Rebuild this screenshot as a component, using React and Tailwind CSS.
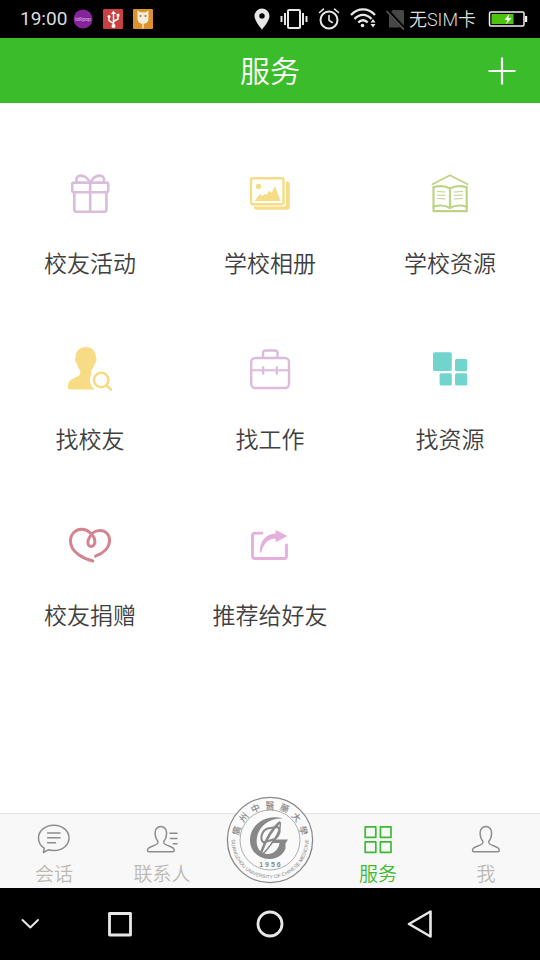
const stroke = { fill: 'none', strokeLinecap: 'round', strokeLinejoin: 'round' };

function GiftIcon() {
  return (
    <svg viewBox="0 0 60 60" className="size-15 text-[#d9bddb]" stroke="currentColor" strokeWidth="2.6" {...stroke}>
      <rect x="12.2" y="18.6" width="36" height="9.6" rx="2" />
      <path d="M14.3 28.4V45.5a2.2 2.2 0 0 0 2.2 2.2H44.2a2.2 2.2 0 0 0 2.2-2.2V28.4" />
      <path d="M30.2 18.6V47.5" />
      <path d="M30 18.4C28 14.5 24.5 11.3 20.2 11.6C16.5 12 15.4 15.5 17 18.4" />
      <path d="M30.4 18.4C32.4 14.5 36 11.3 40.2 11.6C43.9 12 45 15.5 43.4 18.4" />
    </svg>
  );
}

function AlbumIcon() {
  return (
    <svg viewBox="0 0 60 60" className="size-15 text-[#f7dc86]" fill="currentColor">
      <path d="M46 17.5h1.500a2.300 2.300 0 0 1 2.300 2.300V43.500a2.300 2.300 0 0 1-2.300 2.300H16.300a2.300 2.300 0 0 1-2.300-2.300V42.500H43.800a2.200 2.200 0 0 0 2.200-2.200Z" />
      <rect x="11" y="14.2" width="32.5" height="26" rx="1.8" fill="none" stroke="currentColor" strokeWidth="2.4" />
      <circle cx="18.5" cy="22.5" r="2.7" />
      <path d="M14.5 37L19.8 30L22.5 32.2L25 29.5L26.3 31L29.3 26.5L31.5 29L35 22L40.6 37Z" />
    </svg>
  );
}

function BookIcon() {
  return (
    <svg viewBox="0 0 60 60" className="size-15 text-[#bdd486]" stroke="currentColor" strokeWidth="2.2" {...stroke}>
      <path d="M12.5 20.3L30 11.3L47.5 20.3" strokeWidth="1.8" />
      <path d="M30 24.5C26 22 19 21.8 13.5 23V47.2H46.700V23C41 21.8 34 22 30 24.5V43.5" />
      <path d="M13.5 42.7C19 41 26 41.5 30 44C34 41.5 41 41 46.700 42.7" />
      <path d="M17.5 27.5L25 28M17.5 31L25 31.5M17.5 34.5L25 35M34.500 28L42.5 27.5M34.500 31.5L42.5 31M34.500 35L42.5 34.5" strokeWidth="1" />
    </svg>
  );
}

function FindPersonIcon() {
  return (
    <svg viewBox="0 0 60 60" className="size-15 text-[#f8dc85]">
      <path
        d="M25.7 7C32 7 36.2 11.5 36 18C37.2 18.5 36.5 22.5 34.8 23.5C34.2 26.5 32.5 29 31.2 30.5V34.5C33 36.5 38 37.5 41 40V49.5H10C8 49.5 7.5 47.5 8 45C8.8 39.5 14 38 18.5 36C20 35 20.5 33.5 20.2 30.5C18.5 29 17.5 26.5 16.9 23.5C15 22.5 14.5 18.5 15.6 18C15.3 11.5 19.5 7 25.7 7Z"
        fill="currentColor"
      />
      <circle cx="41.2" cy="40" r="11.3" fill="#fff" />
      <path d="M47 46L51 49.6" stroke="currentColor" strokeWidth="2.8" strokeLinecap="round" />
      <circle cx="41.2" cy="40" r="7.2" fill="none" stroke="currentColor" strokeWidth="2.6" />
    </svg>
  );
}

function BriefcaseIcon() {
  return (
    <svg viewBox="0 0 60 60" className="size-15 text-[#dbbddb]" stroke="currentColor" strokeWidth="2.4" {...stroke}>
      <rect x="11.2" y="18" width="37.8" height="30" rx="4" />
      <path d="M23 17.8V13a2.5 2.5 0 0 1 2.5-2.5h9.500a2.500 2.500 0 0 1 2.500 2.500V17.800" />
      <path d="M11.2 30.2H22M25 30.2H35M38 30.2H49" strokeWidth="2" />
      <path d="M23.2 27.5V33.5M36.8 27.5V33.5" />
    </svg>
  );
}

function BlocksIcon() {
  return (
    <svg viewBox="0 0 60 60" className="size-15 text-[#72d5cd]" fill="currentColor">
      <rect x="13" y="12.3" width="18.8" height="18.8" rx="1.5" />
      <rect x="35" y="19" width="12.2" height="12.2" rx="1.5" />
      <rect x="19.6" y="33.3" width="12.2" height="12.2" rx="1.5" />
      <rect x="35" y="33.3" width="12.2" height="12.2" rx="1.5" />
    </svg>
  );
}

function HeartIcon() {
  return (
    <svg viewBox="0 0 60 60" className="size-15 text-[#d38490]" stroke="currentColor" strokeWidth="3" {...stroke}>
      <path d="M32.8 45C24 43 10.5 36.5 10.5 25C10.5 17.5 16 13 22 13.2C28.5 13.5 34.8 19.5 34.9 25.5C35 28.5 33 30.6 30.8 30.4C28 30.2 27.3 27 28.3 24C30 18.5 34.5 14.5 39.8 14.5C45.5 14.5 49.7 18.5 49.6 24.5C49.5 32 42.5 37.5 35.5 40.2" />
    </svg>
  );
}

function ShareIcon() {
  return (
    <svg viewBox="0 0 60 60" className="size-15 text-[#e4aedd]">
      <path d="M22 17.2H15a2.5 2.5 0 0 0-2.5 2.5V40a2.5 2.5 0 0 0 2.500 2.500H44a2.500 2.500 0 0 0 2.500-2.500V29" stroke="currentColor" strokeWidth="2.8" {...stroke} />
      <path d="M19.8 36.8C19.5 26 25 18 35.6 17.6V14L47.5 20L35.6 26.2V22.8C28.500 22.500 23.500 27.500 21.200 36.500Z" fill="currentColor" />
    </svg>
  );
}

function ChatIcon() {
  return (
    <svg viewBox="0 0 36 36" className="size-9" stroke="currentColor" strokeWidth="1.5" {...stroke}>
      <path d="M7.4 31.5L8.3 27.2C4.5 24.900 2.5 21.2 2.5 17C2.5 9.8 9.3 4.3 17.8 4.3C26.4 4.3 33 9.8 33 17C33 24.2 26.4 29.6 17.8 29.6C15.8 29.6 13.9 29.3 12.2 28.8Z" />
      <path d="M11.6 11.9H24M11.6 16.8H24M11.6 21.7H19.5" />
    </svg>
  );
}

const bust =
  'M17.8 5.6C21.5 5.6 23.7 8.3 23.6 12C23.5 15.5 22.5 18.5 20.8 20.2C20.4 22.5 21.3 23.3 24.5 24.4C28.5 25.8 31.2 26.5 31.3 29.2C31.3 30.3 30.8 30.8 29.8 30.8H6C5 30.8 4.5 30.3 4.5 29.2C4.6 26.5 7.3 25.8 11.3 24.4C14.5 23.3 15.3 22.5 14.9 20.2C13.2 18.5 12.2 15.5 12.1 12C12 8.3 14.2 5.6 17.8 5.6Z';

function ContactsIcon() {
  return (
    <svg viewBox="0 0 36 36" className="size-9" stroke="currentColor" strokeWidth="1.5" {...stroke}>
      <path d={bust} transform="translate(-1 0)" />
      <path d="M26 12.3H33M26.5 17.6H33M29.3 22.8H33" />
    </svg>
  );
}

function ServicesIcon() {
  return (
    <svg viewBox="0 0 36 36" className="size-9" stroke="currentColor" strokeWidth="1.7" {...stroke}>
      <rect x="5.2" y="5.8" width="10.6" height="10.6" />
      <rect x="20.4" y="5.8" width="10.6" height="10.6" />
      <rect x="5.2" y="20.8" width="10.6" height="10.6" />
      <rect x="20.4" y="20.8" width="10.6" height="10.6" />
    </svg>
  );
}

function MeIcon() {
  return (
    <svg viewBox="0 0 36 36" className="size-9" stroke="currentColor" strokeWidth="1.5" {...stroke}>
      <path d={bust} />
    </svg>
  );
}

function Crest() {
  return (
    <svg viewBox="0 0 88 88" className="size-22" fill="#888">
      <defs>
        <path id="crest-top" d="M12.5 44A31.500 31.500 0 0 1 75.500 44" />
        <path id="crest-bottom" d="M6.1 37.3A38.500 38.500 0 1 0 81.900 37.300" />
      </defs>
      <circle cx="44" cy="44" r="42.6" fill="#fafafa" stroke="#888" strokeWidth="1.3" />
      <circle cx="44" cy="44" r="30" fill="none" stroke="#999" strokeWidth="0.8" />
      <text className="font-['Noto_Sans_CJK_TC',sans-serif] text-[9px] font-medium">
        <textPath href="#crest-top" startOffset="50%" textAnchor="middle">
          廣&ensp;州&ensp;中&ensp;醫&ensp;藥&ensp;大&ensp;學
        </textPath>
      </text>
      <text className="font-['Liberation_Sans',sans-serif] text-[5px] font-normal">
        <textPath href="#crest-bottom" startOffset="50%" textAnchor="middle">
          GUANGZHOU UNIVERSITY OF CHINESE MEDICINE
        </textPath>
      </text>
      <circle cx="7.8" cy="37" r="0.9" />
      <circle cx="80.2" cy="37" r="0.9" />
      <text x="44" y="71" textAnchor="middle" className="font-['Liberation_Sans',sans-serif] text-[7px] font-bold">
        1 9 5 6
      </text>
      <path d="M57 22.5C42 17.5 25 27 24 43C23.5 55 33 63.5 44 63C52 62.6 57.5 58 59.5 52.5V47.5L62 43.5H47L45 47H53.5C52.5 54 47 58.5 41 58C33 57.3 29.5 50 31 41.5C33 29.5 43.5 22 57 22.5Z" />
      <path d="M54 26C48 31 40 43 34.5 58" fill="none" stroke="#888" strokeWidth="2.5" />
      <path d="M54 26C56 32 49 45 37 58" fill="none" stroke="#888" strokeWidth="1.5" />
      <path d="M41.5 32.5C35.5 35 33.5 43 37.5 46.5L49 43C54 39 55.5 32 51 31Z" fill="none" stroke="#888" strokeWidth="2" />
    </svg>
  );
}

function StatusBar() {
  return (
    <div className="flex h-[38px] items-center justify-between bg-black pr-3 pl-5 text-[18px] text-[#dcdcdc]">
      <div className="flex items-center gap-2.5">
        <span className="-mr-1 font-['Roboto',sans-serif] text-[19px] font-normal">19:00</span>
        <svg viewBox="0 0 20 20" className="size-5">
          <circle cx="10" cy="10" r="9.5" fill="#85239a" />
          <text x="10" y="12" textAnchor="middle" fill="#e4c4ea" className="font-['Liberation_Sans',sans-serif] text-[5px]">
            lollipop
          </text>
        </svg>
        <svg viewBox="0 0 20 20" className="size-5">
          <rect width="20" height="20" rx="1" fill="#c9403f" />
          <path d="M10.5 4V17M10.5 14.5L6 11.5V8M10.5 12.5L15 10V7" stroke="#fff" strokeWidth="1.5" fill="none" />
          <path d="M10.5 1.5L13 5H8Z" fill="#fff" />
          <circle cx="10.5" cy="17" r="2" fill="#fff" />
          <circle cx="6" cy="7.5" r="1.5" fill="#fff" />
          <rect x="13.6" y="4.8" width="2.8" height="2.8" fill="#fff" />
        </svg>
        <svg viewBox="0 0 20 20" className="size-5">
          <rect width="20" height="20" rx="1" fill="#dc922c" />
          <path d="M4.5 1.5L7.5 3.3H12.5L15.5 1.5V9.5C15.5 13 13 14.8 10 14.8S4.5 13 4.5 9.5Z" fill="#f6ecd9" />
          <path d="M10 14.5V19.5" stroke="#f6ecd9" strokeWidth="1.3" />
          <circle cx="7.5" cy="7" r="1" fill="#9a7443" />
          <circle cx="12.5" cy="7" r="1" fill="#9a7443" />
        </svg>
      </div>
      <div className="flex items-center gap-2.5">
        <svg viewBox="0 0 16 22" className="h-[22px] w-4" fill="#e8e8e8">
          <path fillRule="evenodd" d="M8 0.5A7.5 7.5 0 0 0 0.5 8C0.5 13 8 21.5 8 21.5S15.5 13 15.5 8A7.5 7.5 0 0 0 8 0.5ZM8 5.2a2.7 2.7 0 1 1 0 5.4a2.7 2.7 0 0 1 0-5.4Z" />
        </svg>
        <svg viewBox="0 0 28 22" className="h-[22px] w-7" fill="none" stroke="#e8e8e8" strokeWidth="2">
          <rect x="8" y="2" width="12" height="18" rx="1" />
          <path d="M5 5V17M1.5 8V14M23 5V17M26.5 8V14" />
        </svg>
        <svg viewBox="0 0 22 22" className="size-[22px]" stroke="#e8e8e8" strokeWidth="2" {...stroke}>
          <circle cx="11" cy="12" r="8.5" />
          <path d="M11 7.500V12.300L14.200 14.500M1.500 4.500L5.500 1.200M20.500 4.500L16.500 1.200" strokeWidth="1.6" />
        </svg>
        <svg viewBox="0 0 26 22" className="h-[22px] w-[26px]" fill="none" stroke="#e8e8e8" strokeWidth="2.3">
          <path d="M1 7C8 -0.500 18 -0.500 25 7M4.500 11C9.500 5.500 16.500 5.500 21.500 11M8.300 14.500C11 11.500 15 11.500 17.700 14.500" />
          <circle cx="12.5" cy="17.5" r="1.8" fill="#e8e8e8" stroke="none" />
          <path d="M20.500 14.500L23 11L25.500 14.500ZM20.500 16L23 19.500L25.500 16Z" fill="#e8e8e8" stroke="none" />
        </svg>
        <div className="flex items-center gap-[3px]">
          <svg viewBox="0 0 20 22" className="h-[22px] w-5">
            <path d="M7 2H16.5A1.5 1.5 0 0 1 18 3.5V19.5H3V6Z" fill="#474747" />
            <path d="M1 2L18.5 21" stroke="#000" strokeWidth="3.5" />
            <path d="M0.5 3L18 21.5" stroke="#555" strokeWidth="1.8" />
          </svg>
          <span className="pr-0.5 font-['Roboto','Noto_Sans_CJK_SC',sans-serif]">无SIM卡</span>
        </div>
        <svg viewBox="0 0 40 16" className="h-4 w-10">
          <rect x="1.5" y="1" width="34.5" height="14" rx="1.5" fill="none" stroke="#f0f0f0" strokeWidth="1.5" />
          <rect x="3.5" y="3" width="22" height="10" fill="#4cc40f" />
          <rect x="37" y="5" width="2.2" height="6" fill="#f0f0f0" />
          <path d="M21.5 2.5L16.5 9H19.5L18 13.5L23.5 7H20.3Z" fill="#fff" />
        </svg>
      </div>
    </div>
  );
}

const services = [
  { label: '校友活动', Icon: GiftIcon },
  { label: '学校相册', Icon: AlbumIcon },
  { label: '学校资源', Icon: BookIcon },
  { label: '找校友', Icon: FindPersonIcon },
  { label: '找工作', Icon: BriefcaseIcon },
  { label: '找资源', Icon: BlocksIcon },
  { label: '校友捐赠', Icon: HeartIcon },
  { label: '推荐给好友', Icon: ShareIcon },
];

function Tab({ label, Icon, active }) {
  return (
    <a href="#" aria-current={active ? 'page' : undefined} className={`flex flex-col items-center gap-1 pt-[7px] ${active ? 'text-[#3dba33]' : 'text-[#8c8c8c]'}`}>
      <Icon />
      <span className={`text-[19px] leading-6 ${active ? '' : 'text-[#bdbab3]'}`}>{label}</span>
    </a>
  );
}

export default function App() {
  return (
    <div className="flex min-h-screen flex-col bg-white font-['Noto_Sans_CJK_SC',sans-serif] font-[350]">
      <StatusBar />
      <header className="grid h-[65px] grid-cols-[1fr_auto_1fr] items-center bg-[#3bbd2b] px-6 text-white">
        <h1 className="col-start-2 pb-1 text-[30px] leading-10">服务</h1>
        <button type="button" aria-label="添加" className="justify-self-end">
          <svg viewBox="0 0 28 28" className="size-7" stroke="#fff" strokeWidth="2.2">
            <path d="M14 0.5V27.5M0.5 14H27.5" />
          </svg>
        </button>
      </header>

      <main className="flex-1 pt-[61px]">
        <div className="grid grid-cols-3 gap-y-[62px]">
          {services.map(({ label, Icon }) => (
            <button key={label} type="button" className="flex flex-col items-center gap-[22px]">
              <Icon />
              <span className="text-[23px] leading-8 text-[#404040]">{label}</span>
            </button>
          ))}
        </div>
      </main>

      <nav className="grid h-[75px] grid-cols-5 border-t border-[#e2e2e2] bg-[#f8f8f8]">
        <Tab label="会话" Icon={ChatIcon} />
        <Tab label="联系人" Icon={ContactsIcon} />
        <a href="#" aria-label="首页" className="relative">
          <span className="absolute bottom-1 left-1/2 -translate-x-1/2">
            <Crest />
          </span>
        </a>
        <Tab label="服务" Icon={ServicesIcon} active />
        <Tab label="我" Icon={MeIcon} />
      </nav>

      <div className="grid h-18 grid-cols-[1fr_2fr_3fr_2fr_1fr] place-items-center bg-black text-[#e8e8e8]">
        <button type="button" aria-label="收起">
          <svg viewBox="0 0 28 28" className="size-7" stroke="currentColor" strokeWidth="2" {...stroke}>
            <path d="M6.5 10L14.3 17.5L22 10" />
          </svg>
        </button>
        <button type="button" aria-label="最近任务">
          <svg viewBox="0 0 28 28" className="size-7" stroke="currentColor" strokeWidth="2.8" {...stroke}>
            <rect x="3.5" y="3.5" width="21" height="21.5" />
          </svg>
        </button>
        <button type="button" aria-label="主屏幕">
          <svg viewBox="0 0 28 28" className="size-7" stroke="currentColor" strokeWidth="2.8" {...stroke}>
            <circle cx="14" cy="14" r="12" />
          </svg>
        </button>
        <button type="button" aria-label="返回">
          <svg viewBox="0 0 28 28" className="size-7" stroke="currentColor" strokeWidth="2.6" {...stroke}>
            <path d="M3 14L24.5 1.5V26.5Z" />
          </svg>
        </button>
      </div>
    </div>
  );
}
